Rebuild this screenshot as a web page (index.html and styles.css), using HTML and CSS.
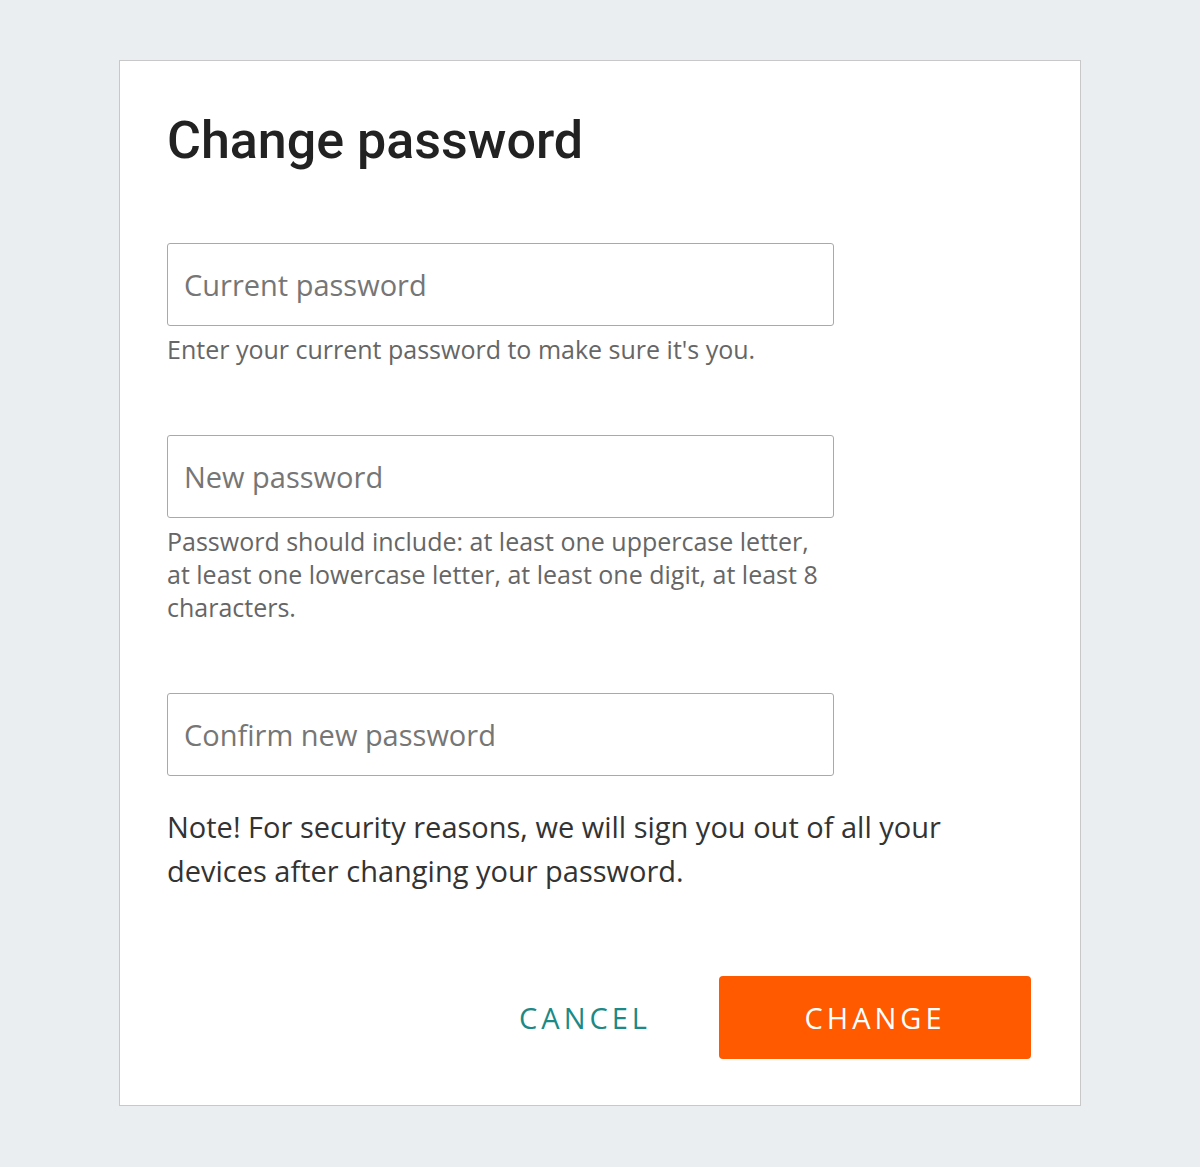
FILE: index.html
```html
<!DOCTYPE html>
<html lang="en">
<head>
  <meta charset="UTF-8">
  <meta name="viewport" content="width=device-width, initial-scale=1.0">
  <title>Change password</title>
  <link rel="stylesheet" href="styles.css">
</head>
<body>
  <div class="dialog">
    <h1>Change password</h1>

    <div class="fields">
      <div class="field">
        <input type="password" placeholder="Current password">
        <p class="hint">Enter your current password to make sure it's you.</p>
      </div>

      <div class="field">
        <input type="password" placeholder="New password">
        <p class="hint">Password should include: at least one uppercase letter, at least one lowercase letter, at least one digit, at least 8 characters.</p>
      </div>

      <div class="field">
        <input type="password" placeholder="Confirm new password">
      </div>
    </div>

    <p class="note">Note! For security reasons, we will sign you out of all your devices after changing your password.</p>

    <div class="actions">
      <button class="cancel-btn">Cancel</button>
      <button class="change-btn">Change</button>
    </div>
  </div>
</body>
</html>
```

FILE: styles.css
```css
:root {
  --bg-color: #eaeef1;
  --card-border: #c8c8c8;
  --input-border: #a9a9a9;
  --placeholder: #767676;
  --hint-color: #666;
  --text-color: #333;
  --teal: #1b8a87;
  --orange: #ff5a00;
}

body {
  margin: 0;
  background-color: var(--bg-color);
  font-family: "Open Sans", Arial, sans-serif;
}

.dialog {
  width: 864px;
  margin: 60px auto 0;
  padding: 48px 49px 46px 47px;
  background: #fff;
  border: 1px solid var(--card-border);
}

h1 {
  margin: 0 0 70px;
  font-family: Roboto, Arial, sans-serif;
  font-weight: 500;
  font-size: 52px;
  line-height: 64px;
  color: #222;
}

.fields {
  display: flex;
  flex-direction: column;
  gap: 69px;
}

.field input {
  display: block;
  box-sizing: border-box;
  width: 667px;
  height: 83px;
  padding: 0 16px;
  border: 1px solid var(--input-border);
  border-radius: 3px;
  font-family: "Open Sans", Arial, sans-serif;
  font-size: 29px;
  color: var(--text-color);
}

.field input::placeholder {
  color: var(--placeholder);
}

.hint {
  width: 660px;
  margin: 7px 0 0;
  font-size: 25px;
  line-height: 33px;
  color: var(--hint-color);
}

.note {
  width: 800px;
  margin: 29px 0 0;
  font-size: 29px;
  line-height: 44px;
  color: var(--text-color);
}

.actions {
  display: flex;
  justify-content: flex-end;
  align-items: center;
  gap: 68px;
  margin-top: 83px;
}

.actions button {
  font-family: "Open Sans", Arial, sans-serif;
  font-size: 29px;
  letter-spacing: 4px;
  text-transform: uppercase;
  border: none;
  cursor: pointer;
}

.cancel-btn {
  background: none;
  color: var(--teal);
  padding: 0;
}

.change-btn {
  width: 312px;
  height: 83px;
  background-color: var(--orange);
  color: #fff;
  border-radius: 4px;
}
```
